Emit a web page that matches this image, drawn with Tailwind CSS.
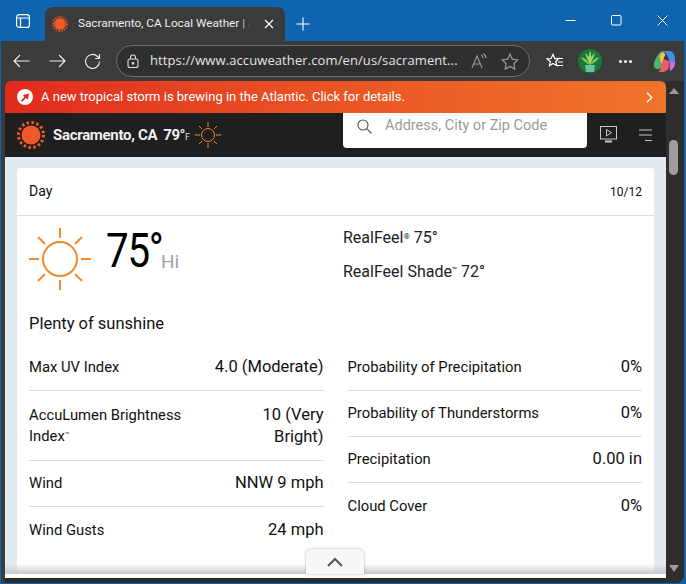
<!DOCTYPE html>
<html lang="en">
<head>
<meta charset="UTF-8" />
<title>Sacramento, CA Local Weather</title>
<script src="https://cdn.jsdelivr.net/npm/@tailwindcss/browser@4"></script>
</head>
<body class="bg-[#0e64ae] font-['Roboto',sans-serif] overflow-hidden">
<div class="w-[686px] h-[583px] flex flex-col overflow-hidden">
  <!-- tab strip -->
  <div class="h-[41px] flex items-end shrink-0">
    <div class="w-[45px] h-[41px] flex items-center justify-center">
      <svg width="14" height="14" viewBox="0 0 14 14" fill="none" stroke="#fff" stroke-width="1.2"><rect x=".6" y=".6" width="12.8" height="12.8" rx="2.5"/><path d="M.6 4h12.8M4.5 4v9.4"/></svg>
    </div>
    <div class="w-[240px] h-[34px] bg-[#3b3b3b] rounded-t-lg flex items-center pl-[7px] text-white">
      <svg width="16" height="16" viewBox="0 0 16 16" fill="none"><circle cx="8" cy="8" r="7" stroke="#c9502a" stroke-width="2" stroke-dasharray="1.700 1.050"/><circle cx="8" cy="8" r="5.800" fill="#f05a28"/></svg>
      <span class="relative ml-[10px] w-[173px] overflow-hidden whitespace-nowrap text-[11.750px] text-[#eee]">Sacramento, CA Local Weather | A<i class="absolute right-0 top-0 h-full w-[10px] bg-gradient-to-r from-transparent to-[#3b3b3b]"></i></span>
      <svg class="ml-[13px]" width="10" height="10" viewBox="0 0 10 10" stroke="#fff" stroke-width="1.1"><path d="M1 1l8 8M9 1l-8 8"/></svg>
    </div>
    <div class="w-[36px] h-[34px] flex items-center justify-center">
      <svg width="14" height="14" viewBox="0 0 14 14" stroke="#fff" stroke-width="1.1"><path d="M7 .5v13M.5 7h13"/></svg>
    </div>
    <div class="ml-auto mr-px h-[41px] flex">
      <div class="w-[46px] flex items-center justify-center"><svg width="11" height="11" viewBox="0 0 11 11" stroke="#fff"><path d="M.5 5.500h10"/></svg></div>
      <div class="w-[46px] flex items-center justify-center"><svg width="11" height="11" viewBox="0 0 11 11" fill="none" stroke="#fff"><rect x=".5" y=".5" width="9.500" height="9.500" rx="1"/></svg></div>
      <div class="w-[46px] flex items-center justify-center"><svg width="11" height="11" viewBox="0 0 11 11" stroke="#fff"><path d="M.5.5l10 10M10.500.5l-10 10"/></svg></div>
    </div>
  </div>
  <!-- browser frame -->
  <div class="flex-1 bg-[#3b3b3b] flex flex-col min-h-0 ml-px mr-[2px] rounded-br-lg overflow-hidden">
    <!-- toolbar -->
    <div class="h-[40px] flex items-center shrink-0">
      <svg class="ml-[12px]" width="17" height="14" viewBox="0 0 17 14" fill="none" stroke="#eee" stroke-width="1.1"><path d="M16.500 7H1M7 1L1 7l6 6"/></svg>
      <svg class="ml-[19px]" width="17" height="14" viewBox="0 0 17 14" fill="none" stroke="#eee" stroke-width="1.1"><path d="M.5 7H16M10 1l6 6-6 6"/></svg>
      <svg class="ml-[18px]" width="17" height="17" viewBox="0 0 17 17" fill="none" stroke="#eee" stroke-width="1.1"><path d="M15.500 8.500a7 7 0 1 1-2-5L15.500 5.500M15.500 1v4.500H11"/></svg>
      <div class="ml-[15px] w-[414px] h-[32px] rounded-full border border-[#6c6c6c] bg-[#2f2f2f] flex items-center pl-[9px]">
        <svg width="14" height="15" viewBox="0 0 14 15" fill="none" stroke="#ddd" stroke-width="1.1"><rect x="2" y="5" width="10" height="8.500" rx="2"/><path d="M4.500 5V3.500a2.500 2.500 0 0 1 5 0V5"/><circle cx="7" cy="9.300" r=".8" fill="#ddd"/></svg>
        <span class="ml-[10px] w-[307px] text-[13px] font-['Open_Sans',sans-serif] text-[#e3e3e3] whitespace-nowrap tracking-[0.1px]">https://www.accuweather.com/en/us/sacrament...</span>
        <svg class="ml-[14px]" width="16" height="16" viewBox="0 0 16 16" fill="none" stroke="#999" stroke-width="1.100"><path d="M1 15L6 3l5 12M2.700 11h6.600M10 2c1.500.5 2 1.500 2 3M12 .8c2 .7 3 2.300 3 4.500"/></svg>
        <svg class="ml-[14px]" width="18" height="17" viewBox="0 0 18 17" fill="none" stroke="#999" stroke-width="1.2"><path d="M9 1.200l2.400 5 5.400.7-4 3.800 1 5.400L9 13.500l-4.800 2.600 1-5.400-4-3.800 5.400-.7z"/></svg>
      </div>
      <svg class="ml-[16px]" width="18" height="17" viewBox="0 0 18 17" fill="none" stroke="#fff" stroke-width="1.200"><path d="M7 1.500L8.800 5.600l4-.1-3 3 1 4-3.800-2-3.500 2.300.8-4.300L1 5.800l4-.3zM12 5.500h5M12 9h5M11 12.500h6"/></svg>
      <div class="ml-[14px] w-[24px] h-[24px] rounded-full bg-[#187a3a] flex items-center justify-center overflow-hidden">
        <svg width="24" height="24" viewBox="0 0 24 24"><path d="M12 16C10 11 8 8 7 4c3 2 4 4 4 5 0-3 0-5 1-7 1 2 1 4 1 7 0-1 1-3 4-5-1 4-3 7-5 12z" fill="#a8d86c"/><path d="M12 16C8 14 5 12 3 8c4 1 6 3 9 8zM12 16c4-2 7-4 9-8-4 1-6 3-9 8z" fill="#8cc85c"/><path d="M7 16h10l-1 7H8z" fill="#6cc3a4"/></svg>
      </div>
      <div class="ml-[17px] flex gap-[2px]">
        <i class="w-[3px] h-[3px] rounded-full bg-white"></i><i class="w-[3px] h-[3px] rounded-full bg-white"></i><i class="w-[3px] h-[3px] rounded-full bg-white"></i>
      </div>
      <svg class="ml-[21px]" width="23" height="23" viewBox="0 0 22 22">
        <path d="M6 3c2-2 4-2 5 0l-3 13c-1 3-6 3-7 0-1-4 2-9 5-13z" fill="#4fb36a"/>
        <path d="M8 1h8c3 0 5 4 5 8 0 4-3 5-5 3l-2-6C13 3 11 2 8 1z" fill="#3f8ef0"/>
        <path d="M8 8l8 3-1 6c-1 3-4 4-6 4H5c2-1 2-3 3-6z" fill="#ee5b6f"/>
        <path d="M16 10c2 3 5 2 5-1 1 6-2 10-5 11z" fill="#d66ad8"/>
        <path d="M6 6l3-4 3 2-4 9z" fill="#f4c542"/>
      </svg>
    </div>
    <!-- viewport -->
    <div class="flex-1 flex min-h-0 ml-[4px] overflow-hidden">
      <div class="w-[661px] flex flex-col min-h-0">
        <div class="flex-1 flex flex-col min-h-0 relative rounded-t-md overflow-hidden">
          <!-- alert banner -->
          <div class="h-[32px] shrink-0 bg-gradient-to-r from-[#e1291e] to-[#f0742b] flex items-center pl-[12px] pr-[13px] text-white">
            <svg width="16" height="16" viewBox="0 0 16 16"><circle cx="8" cy="8" r="8" fill="#fff"/><path d="M3.500 12l4-4-1.500-2 6-1.500-1 6-2-1.500-3.500 3.500z" fill="#e1291e"/></svg>
            <span class="ml-[8px] text-[13px]">A new tropical storm is brewing in the Atlantic. Click for details.</span>
            <svg class="ml-auto" width="7" height="11" viewBox="0 0 7 11" fill="none" stroke="#fff" stroke-width="1.300"><path d="M1 .8l4.700 4.700L1 10.200"/></svg>
          </div>
          <!-- site header -->
          <div class="h-[44px] shrink-0 bg-[#1f1f1f] flex items-center pl-[12px]">
            <svg width="28" height="28" viewBox="0 0 28 28" fill="none"><circle cx="14" cy="14" r="12.500" stroke="#f05a28" stroke-width="3" stroke-dasharray="2.500 2.410"/><circle cx="14" cy="14" r="10.500" fill="#1f1f1f"/><circle cx="14" cy="14" r="9.500" fill="#f05a28"/></svg>
            <span class="ml-[8px] text-[15px] font-bold text-[#f0f0f0] tracking-[-0.3px]">Sacramento, CA</span>
            <span class="ml-[6px] text-[15px] font-bold text-[#f0f0f0] tracking-[-0.5px]">79°</span>
            <span class="mt-[6px] text-[9px] text-[#ddd]">F</span>
            <svg class="ml-[4px]" width="28" height="28" viewBox="0 0 28 28" fill="none" stroke="#e8882c" stroke-width="1"><circle cx="14" cy="14" r="6.500"/><path d="M14 1v5M14 22v5M1 14h5M22 14h5M5 5l3 3M20 20l3 3M5 23l3-3M20 8l3-3"/></svg>
            <div class="ml-auto self-start w-[244px] h-[35px] bg-white rounded-b-[4px] flex items-center pl-[14px] pb-[9px]">
              <svg width="15" height="15" viewBox="0 0 15 15" fill="none" stroke="#555" stroke-width="1.100"><circle cx="6" cy="6" r="5"/><path d="M9.700 9.700l4.800 4.800"/></svg>
              <span class="ml-[13px] text-[14.500px] text-[#9a9a9a]">Address, City or Zip Code</span>
            </div>
            <svg class="ml-[13px]" width="18" height="18" viewBox="0 0 18 18" fill="none" stroke="#c8c8c8"><rect x=".5" y=".5" width="16" height="12.500"/><path d="M6.500 3.500l5 3.200-5 3.200z"/><path d="M5 15.500h7" stroke-width="2"/></svg>
            <svg class="ml-[21px] mr-[14px]" width="13" height="13" viewBox="0 0 13 13" stroke="#c8c8c8"><path d="M0 1h13M0 6h13M6 11.500h7"/></svg>
          </div>
          <!-- content -->
          <div class="flex-1 bg-[#e3eaf2] pt-[11px] px-[12px] min-h-0 overflow-hidden">
            <div class="bg-white rounded-t-[3px] h-[420px] text-[#111]">
              <div class="h-[48px] border-b border-[#ddd] flex items-center justify-between pl-[12px] pr-[12px] text-[14px]">
                <span>Day</span><span class="text-[12px]">10/12</span>
              </div>
              <div class="flex h-[83px]">
                <div class="w-[326px] flex items-start pl-[12px] pt-[11px]">
                  <svg width="62" height="64" viewBox="0 0 62 64" fill="none" stroke="#f58a33" stroke-width="2"><circle cx="31" cy="32" r="17"/><path d="M31 1v10M31 53v10M0 32h10M52 32h10M9 10l7 7M46 47l7 7M9 54l7-7M46 17l7-7"/></svg>
                  <span class="ml-[15px] w-[55px] inline-block origin-left scale-x-[0.84] whitespace-nowrap text-[48px] leading-[56px] tracking-[-1.500px] text-black mt-[-4px]">75°</span>
                  <span class="mt-[21px] text-[19px] text-[#9aa3ae]">Hi</span>
                </div>
                <div class="text-[16px] text-[#222] pt-[10px]">
                  <div class="h-[34px]">RealFeel<sup class="text-[8px]">®</sup> 75°</div>
                  <div>RealFeel Shade<sup class="text-[8px]">™</sup> 72°</div>
                </div>
              </div>
              <div class="pl-[12px] pt-[13px] h-[46px] text-[16.500px]">Plenty of sunshine</div>
              <div class="grid grid-cols-2 gap-x-[24px] px-[12px]">
                <div>
                  <div class="h-[46px] border-b border-[#ddd] flex items-center justify-between"><span class="text-[14.800px]">Max UV Index</span><span class="text-[16.500px]">4.0 (Moderate)</span></div>
                  <div class="h-[70px] border-b border-[#ddd] flex items-center justify-between"><span class="text-[14.800px] leading-[21px] w-[170px]">AccuLumen Brightness Index<sup class="text-[7px] leading-none">™</sup></span><span class="text-[16.500px] leading-[22px] text-right w-[90px]">10 (Very Bright)</span></div>
                  <div class="h-[46px] border-b border-[#ddd] flex items-center justify-between"><span class="text-[14.800px]">Wind</span><span class="text-[16.500px]">NNW 9 mph</span></div>
                  <div class="h-[46px] flex items-center justify-between"><span class="text-[14.800px]">Wind Gusts</span><span class="text-[16.500px]">24 mph</span></div>
                </div>
                <div>
                  <div class="h-[46px] border-b border-[#ddd] flex items-center justify-between"><span class="text-[14.800px]">Probability of Precipitation</span><span class="text-[16.500px]">0%</span></div>
                  <div class="h-[46px] border-b border-[#ddd] flex items-center justify-between"><span class="text-[14.800px]">Probability of Thunderstorms</span><span class="text-[16.500px]">0%</span></div>
                  <div class="h-[46px] border-b border-[#ddd] flex items-center justify-between"><span class="text-[14.800px]">Precipitation</span><span class="text-[16.500px]">0.00 in</span></div>
                  <div class="h-[46px] flex items-center justify-between"><span class="text-[14.800px]">Cloud Cover</span><span class="text-[16.500px]">0%</span></div>
                </div>
              </div>
            </div>
          </div>
          <!-- fade and collapse tab over the content -->
          <div class="absolute left-0 right-0 bottom-0 h-[4px] bg-white"></div>
          <div class="absolute left-0 right-0 bottom-[4px] h-[10px] bg-gradient-to-b from-white/0 to-[#c8c8c8]"></div>
          <div class="absolute left-[301px] bottom-[4px] w-[58px] h-[25px] bg-[#f8f8f8] rounded-t-[6px] shadow-[0_0_3px_#0000004d] flex items-center justify-center">
            <svg width="16" height="10" viewBox="0 0 16 10" fill="none" stroke="#555" stroke-width="2"><path d="M1 9l7-7 7 7"/></svg>
          </div>
        </div>
        <div class="h-[5px] bg-[#2b2b2b] shrink-0"></div>
      </div>
      <!-- scrollbar -->
      <div class="flex-1 bg-[#2e2e2e] relative">
        <div class="absolute left-[3px] top-[7px] border-x-[5px] border-x-transparent border-b-[6px] border-b-[#9a9a9a]"></div>
        <div class="absolute left-[3px] top-[59px] w-[9px] h-[35px] rounded-full bg-[#9e9e9e]"></div>
        <div class="absolute left-[3px] bottom-[11px] border-x-[5px] border-x-transparent border-t-[7px] border-t-[#9a9a9a]"></div>
      </div>
    </div>
  </div>
</div>
</body>
</html>
